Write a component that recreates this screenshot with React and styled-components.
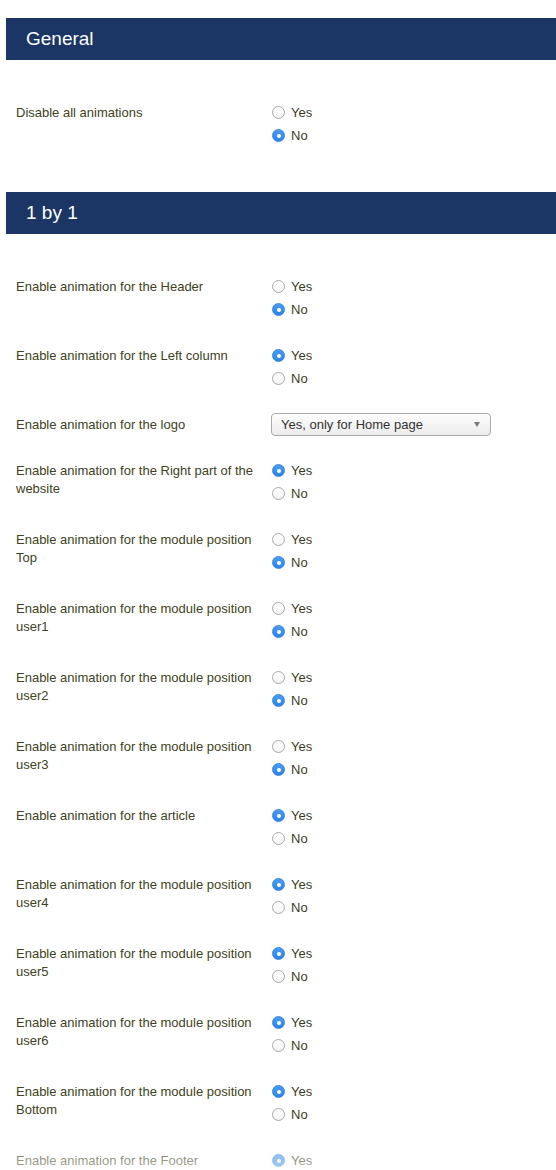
import React from 'react';
import styled, { createGlobalStyle } from 'styled-components';

const GlobalStyle = createGlobalStyle`
  body {
    margin: 0;
    background: #fff;
    font-family: "Liberation Sans", Arial, Helvetica, sans-serif;
    overflow: hidden;
  }
`;

const sections = [
  {
    title: 'General',
    rows: [{ label: 'Disable all animations', value: 'no' }],
  },
  {
    title: '1 by 1',
    rows: [
      { label: 'Enable animation for the Header', value: 'no' },
      { label: 'Enable animation for the Left column', value: 'yes' },
      { label: 'Enable animation for the logo', select: 'Yes, only for Home page' },
      { label: 'Enable animation for the Right part of the website', value: 'yes' },
      { label: 'Enable animation for the module position Top', value: 'no' },
      { label: 'Enable animation for the module position user1', value: 'no' },
      { label: 'Enable animation for the module position user2', value: 'no' },
      { label: 'Enable animation for the module position user3', value: 'no' },
      { label: 'Enable animation for the article', value: 'yes' },
      { label: 'Enable animation for the module position user4', value: 'yes' },
      { label: 'Enable animation for the module position user5', value: 'yes' },
      { label: 'Enable animation for the module position user6', value: 'yes' },
      { label: 'Enable animation for the module position Bottom', value: 'yes' },
      { label: 'Enable animation for the Footer', value: 'yes' },
    ],
  },
];

const Page = () => {
  return (
    <>
      <GlobalStyle />
      <Container>
        {sections.map((section, si) => (
          <Section key={si} first={si === 0}>
            <SectionTitle>{section.title}</SectionTitle>
            {section.rows.map((row, ri) => (
              <Row key={ri}>
                <Label>{row.label}</Label>
                {row.select ? (
                  <Select>
                    <span>{row.select}</span>
                    <Arrow />
                  </Select>
                ) : (
                  <Options>
                    <Option>
                      <Radio checked={row.value === 'yes'} />
                      <span>Yes</span>
                    </Option>
                    <Option>
                      <Radio checked={row.value === 'no'} />
                      <span>No</span>
                    </Option>
                  </Options>
                )}
              </Row>
            ))}
          </Section>
        ))}
      </Container>
      <Fade />
    </>
  );
};

const Container = styled.div`
  padding-left: 6px;
  padding-top: 18px;
`;

const Section = styled.section`
  display: flow-root;
  margin-top: ${(p) => (p.first ? '0' : '22px')};
`;

const SectionTitle = styled.h2`
  margin: 0 0 41px;
  height: 42px;
  box-sizing: border-box;
  padding: 0 20px;
  display: flex;
  align-items: center;
  background: #1b3664;
  color: #fff;
  font-size: 19px;
  font-weight: normal;
`;

const Row = styled.div`
  display: grid;
  grid-template-columns: 255px 1fr;
  padding-left: 10px;
  margin-bottom: 23px;
  align-items: start;
`;

const Label = styled.div`
  width: 245px;
  padding-top: 3px;
  font-size: 13px;
  line-height: 18px;
  color: #404221;
`;

const Options = styled.div`
  display: flex;
  flex-direction: column;
`;

const Option = styled.label`
  display: flex;
  align-items: center;
  gap: 6px;
  height: 23px;
  font-size: 13px;
  color: #3b3c1f;
  padding-left: 1px;
`;

const Radio = styled.span`
  width: 13px;
  height: 13px;
  box-sizing: border-box;
  border-radius: 50%;
  position: relative;
  border: 1px solid ${(p) => (p.checked ? '#2f86e8' : '#a9a9a9')};
  background: ${(p) =>
    p.checked ? 'linear-gradient(#4c9cf3, #2d83e6)' : 'linear-gradient(#fff, #f4f4f4)'};
  &::after {
    content: '';
    display: ${(p) => (p.checked ? 'block' : 'none')};
    position: absolute;
    left: 50%;
    top: 50%;
    width: 4px;
    height: 4px;
    margin: -2px 0 0 -2px;
    border-radius: 50%;
    background: #fff;
  }
`;

const Select = styled.div`
  width: 220px;
  height: 23px;
  box-sizing: border-box;
  border: 1px solid #a9a9a9;
  border-radius: 4px;
  background: linear-gradient(#fdfdfd, #ececec);
  display: flex;
  align-items: center;
  justify-content: space-between;
  padding: 0 10px 0 9px;
  font-size: 13px;
  color: #333;
`;

const Arrow = styled.span`
  width: 0;
  height: 0;
  border-left: 3px solid transparent;
  border-right: 3px solid transparent;
  border-top: 5px solid #7a7a7a;
`;

const Fade = styled.div`
  position: fixed;
  left: 0;
  right: 0;
  bottom: 0;
  height: 40px;
  background: linear-gradient(rgba(255, 255, 255, 0), rgba(255, 255, 255, 0.6));
  pointer-events: none;
`;

export default Page;
